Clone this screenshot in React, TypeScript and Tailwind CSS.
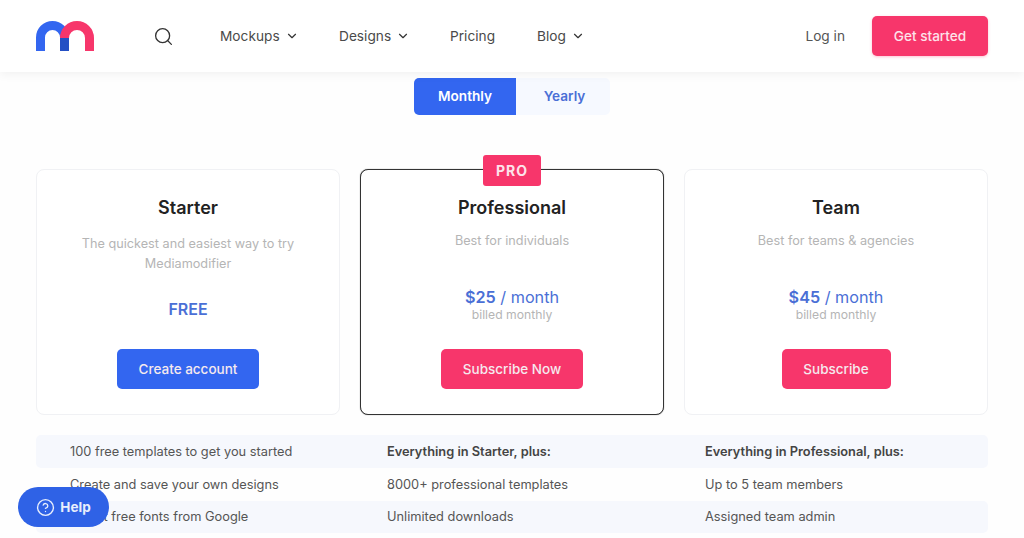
import React from 'react';
import { ChevronDown, Search, CircleHelp } from 'lucide-react';

const Logo = () => (
  <svg width="58" height="30" viewBox="0 0 58 30" fill="none">
    <path d="M4.500 30V16.500A12 12 0 0 1 28.500 16.500V30" stroke="#3366f0" strokeWidth="9" />
    <path d="M28.500 17V30" stroke="#2450c4" strokeWidth="9" />
    <path d="M28.500 17A12.500 12.500 0 0 1 53.500 17V30" stroke="#f7366b" strokeWidth="9" />
  </svg>
);

const NavItem = ({ label, chevron }: { label: string; chevron?: boolean }) => (
  <div className="flex items-center gap-[5px] text-[13.7px] text-[#4a4a4a]">
    <span>{label}</span>
    {chevron && <ChevronDown size={14} strokeWidth={2} className="text-[#333]" />}
  </div>
);

const Header = () => (
  <header className="relative z-10 flex h-[72px] items-center bg-white pl-[36px] pr-[36px] shadow-[0_2px_10px_rgba(0,0,0,0.06)]">
    <Logo />
    <Search size={21} strokeWidth={1.5} className="ml-[59px] text-[#333]" />
    <nav className="ml-[46px] flex items-center">
      <div className="w-[119px]"><NavItem label="Mockups" chevron /></div>
      <div className="w-[111px]"><NavItem label="Designs" chevron /></div>
      <div className="w-[87px]"><NavItem label="Pricing" /></div>
      <NavItem label="Blog" chevron />
    </nav>
    <span className="ml-auto mr-[27px] text-[13.7px] text-[#555]">Log in</span>
    <button className="h-[40px] w-[116px] rounded-[5px] bg-[#f7366b] text-[13.6px] font-medium text-[#fde3ea] shadow-[0_1px_3px_rgba(247,54,107,0.3)]">
      Get started
    </button>
  </header>
);

const Toggle = () => (
  <div className="flex justify-center pt-[6px]">
    <div className="flex h-[37px] w-[196px] rounded-[5px] bg-[#f6f9ff] text-[13.6px] font-semibold">
      <div className="flex w-[102px] items-center justify-center rounded-l-[5px] bg-[#3366f0] text-white">Monthly</div>
      <div className="flex flex-1 items-center justify-center pl-[3px] text-[#4a6fd6]">Yearly</div>
    </div>
  </div>
);

interface PlanProps {
  title: string;
  desc: React.ReactNode;
  price?: string;
  cta: string;
  ctaClass: string;
  pro?: boolean;
}

const Plan = ({ title, desc, price, cta, ctaClass, pro }: PlanProps) => (
  <div className={`relative flex h-[246px] w-[304px] flex-col items-center rounded-[8px] bg-white pt-[26px] ${pro ? 'border border-[#333] shadow-[0_0_1px_rgba(0,0,0,0.6)]' : 'border border-[#f0f1f4]'}`}>
    {pro && (
      <div className="absolute left-[122px] top-[-15px] flex h-[31px] w-[58px] items-center justify-center rounded-[3px] bg-[#f7366b] text-[14px] font-bold tracking-[1px] text-[#fde3ea]">
        PRO
      </div>
    )}
    <h3 className="translate-y-[0.5px] text-[18px] font-semibold leading-[22px] text-[#222]">{title}</h3>
    {desc}
    {price && (
      <div className="mt-[36px] text-center">
        <div className="text-[16.2px] leading-[20px] text-[#4a6fd6]">
          <span className="font-semibold">{price}</span> / month
        </div>
        <div className="text-[12.2px] leading-[16px] text-[#b5b5b5]">billed monthly</div>
      </div>
    )}
    <button className={`absolute bottom-[25px] h-[40px] rounded-[5px] text-[13.5px] font-medium text-[#f5e9ee] ${ctaClass}`}>{cta}</button>
  </div>
);

const rows = [
  ['100 free templates to get you started', 'Everything in Starter, plus:', 'Everything in Professional, plus:'],
  ['Create and save your own designs', '8000+ professional templates', 'Up to 5 team members'],
  ['Select free fonts from Google', 'Unlimited downloads', 'Assigned team admin'],
];

const Features = () => (
  <div className="mx-[36px] mt-[20px] text-[12.8px] text-[#555]">
    {rows.map((row, i) => (
      <div key={i} className={`grid grid-cols-[317px_318px_1fr] items-center rounded-[5px] pl-[34px] ${i === 2 ? 'h-[32px]' : 'h-[33px]'} ${i % 2 === 0 ? 'bg-[#f6f8fd]' : ''}`}>
        {row.map((cell, j) => (
          <span key={j} className={i === 0 && j > 0 ? 'font-semibold text-[#444]' : ''}>{cell}</span>
        ))}
      </div>
    ))}
  </div>
);

export default function App() {
  return (
    <div className="relative h-[538px] w-[1024px] overflow-hidden bg-[#fefefe] font-['Inter',sans-serif]">
      <Header />
      <Toggle />
      <div className="mt-[54px] flex justify-between px-[36px]">
        <Plan
          title="Starter"
          desc={
            <>
              <p className="mt-[16px] w-[240px] text-center text-[12.7px] leading-[20px] text-[#b5b5b5]">
                The quickest and easiest way to try Mediamodifier
              </p>
              <div className="mt-[25px] text-[16px] font-semibold leading-[20px] text-[#4a6fd6]">FREE</div>
            </>
          }
          cta="Create account"
          ctaClass="w-[142px] bg-[#3366f0]"
        />
        <Plan
          pro
          title="Professional"
          desc={<p className="mt-[13px] text-[12.7px] leading-[20px] text-[#b5b5b5]">Best for individuals</p>}
          price="$25"
          cta="Subscribe Now"
          ctaClass="w-[142px] bg-[#f7366b]"
        />
        <Plan
          title="Team"
          desc={<p className="mt-[13px] text-[12.7px] leading-[20px] text-[#b5b5b5]">Best for teams &amp; agencies</p>}
          price="$45"
          cta="Subscribe"
          ctaClass="w-[109px] bg-[#f7366b]"
        />
      </div>
      <Features />
      <button className="absolute bottom-[11px] left-[18px] flex h-[40px] w-[91px] items-center justify-center gap-[5px] rounded-full bg-[#2f62e6] text-[13.5px] font-bold text-[#e8eefc]">
        <CircleHelp size={19} strokeWidth={1.75} />
        Help
      </button>
    </div>
  );
}
